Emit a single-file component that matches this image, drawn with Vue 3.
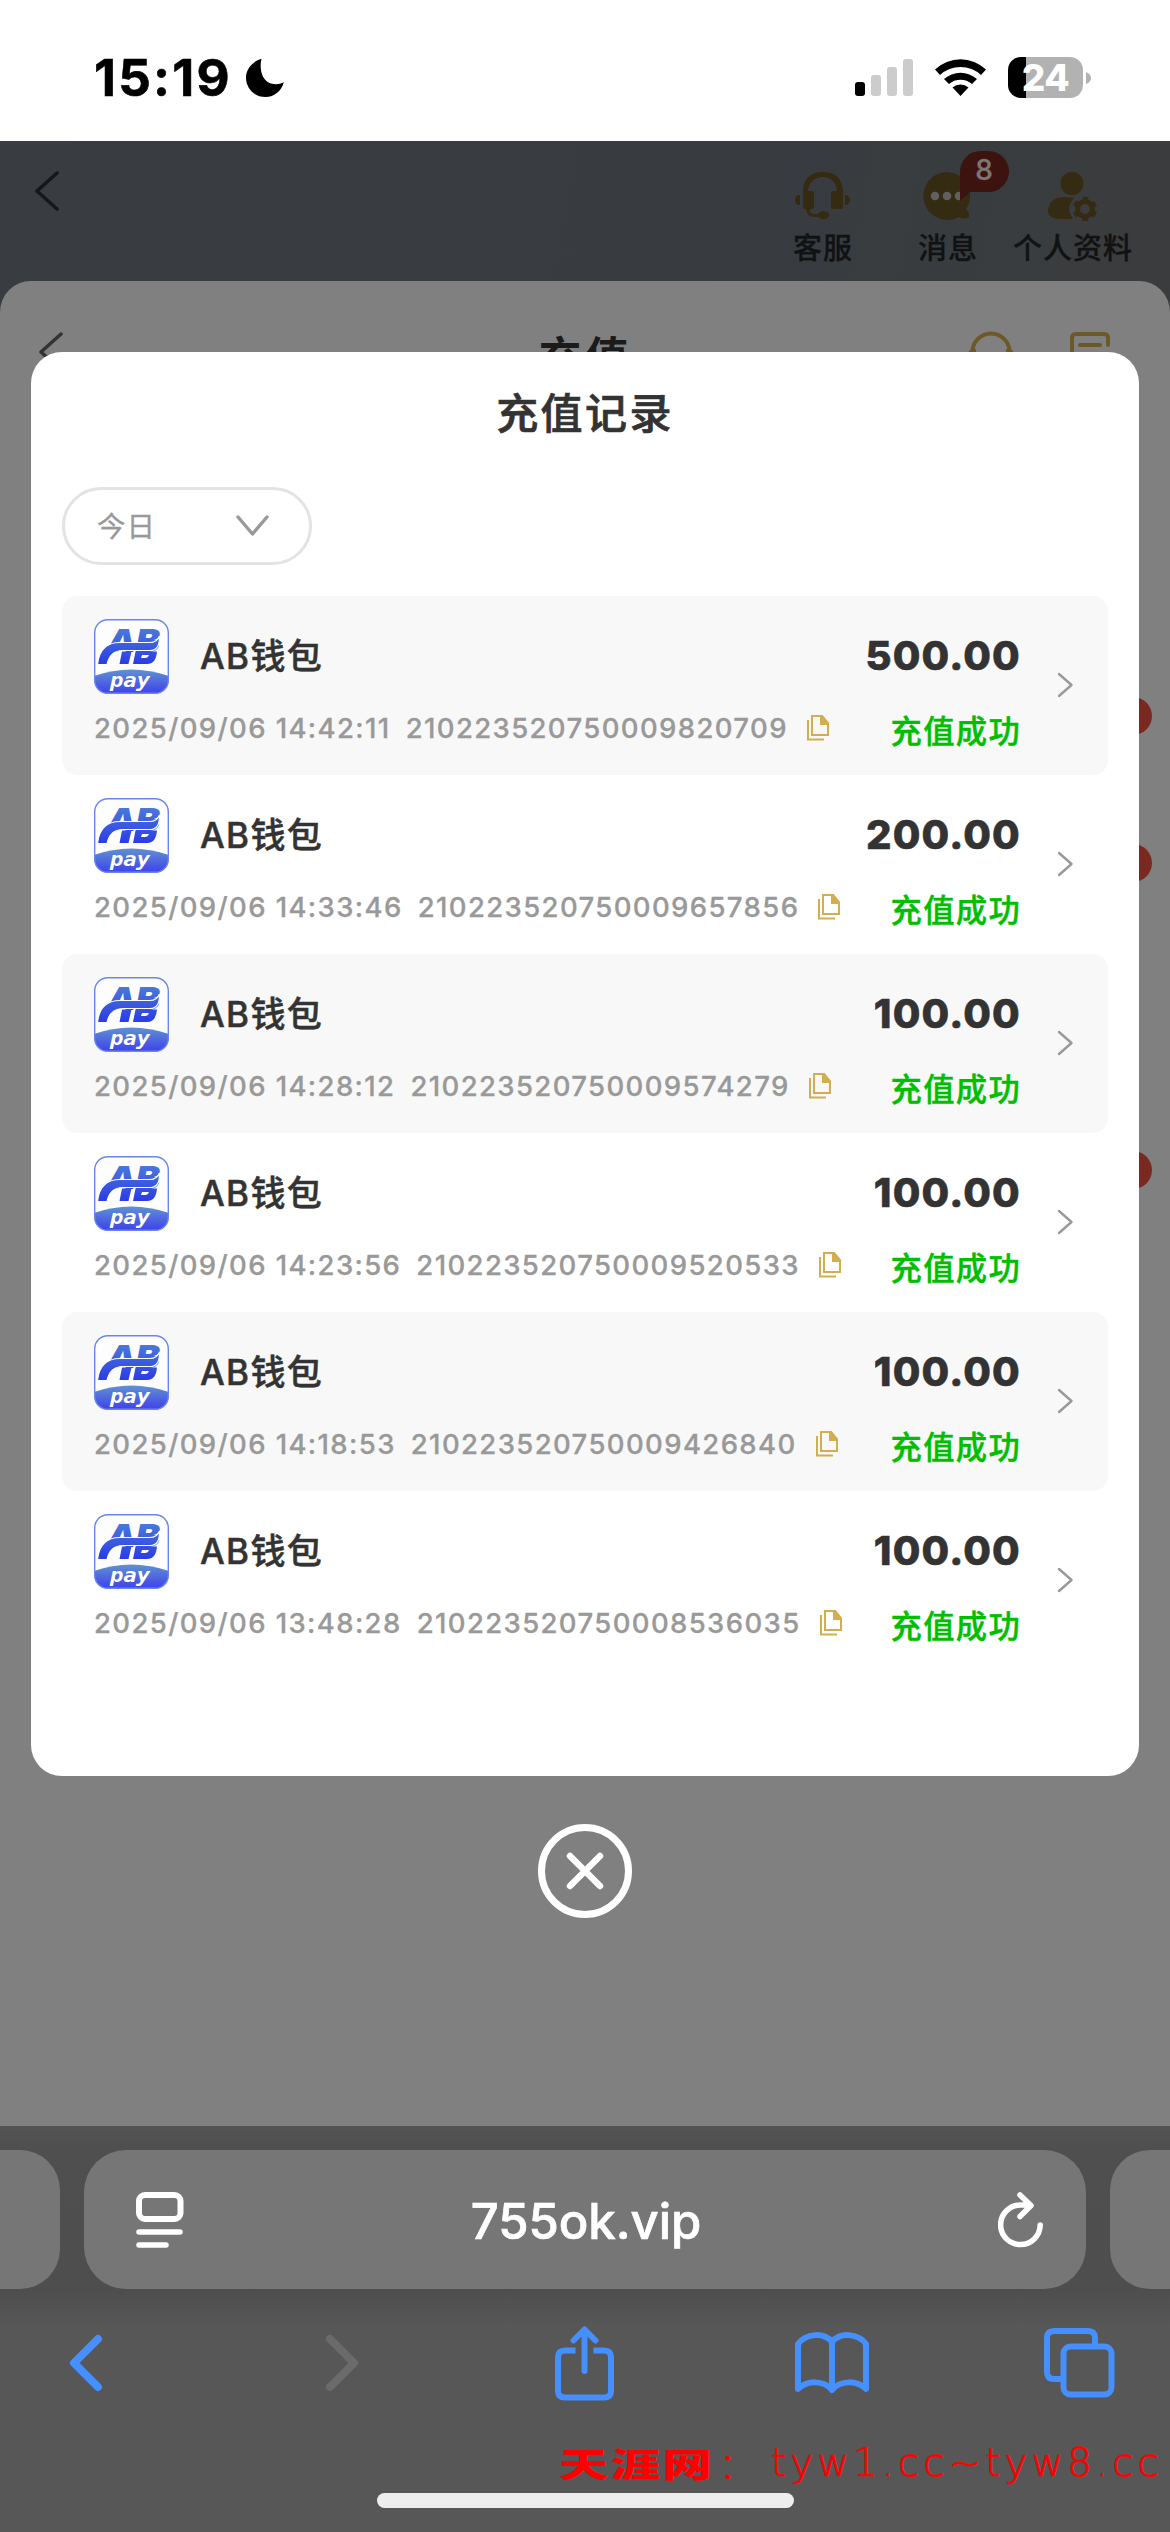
<script setup>
const records = [
  { time: '2025/09/06 14:42:11', id: '210223520750009820709', amount: '500.00' },
  { time: '2025/09/06 14:33:46', id: '210223520750009657856', amount: '200.00' },
  { time: '2025/09/06 14:28:12', id: '210223520750009574279', amount: '100.00' },
  { time: '2025/09/06 14:23:56', id: '210223520750009520533', amount: '100.00' },
  { time: '2025/09/06 14:18:53', id: '210223520750009426840', amount: '100.00' },
  { time: '2025/09/06 13:48:28', id: '210223520750008536035', amount: '100.00' }
]
</script>

<template>
  <div class="phone">
    <div class="status-bar">
      <span class="clock">15:19</span>
      <svg class="moon" width="40" height="40" viewBox="0 0 40 40"><path d="M16.500.8C14 11 17 23 26 25.500C30.500 26.800 35 26.300 38.800 24.300C36.500 33 29.500 39 20.500 39C9.500 39 1 30.500 1 19.500C1 11 7.500 3.500 16.500.8Z" /></svg>
      <span class="grow"></span>
      <svg width="58" height="38" viewBox="0 0 58 38">
        <rect y="23" width="10" height="14" rx="3" />
        <g fill="#ccc"><rect x="16" y="16" width="10" height="21" rx="3" /><rect x="32" y="8" width="10" height="29" rx="3" /><rect x="48" y="0" width="10" height="37" rx="3" /></g>
      </svg>
      <svg class="wifi" width="51" height="38" viewBox="0 0 51 38">
        <path d="M0 10.500A37 37 0 0 1 51 10.500L46 16A30 30 0 0 0 5 16Z" />
        <path d="M9 20A25 25 0 0 1 42 20L37 25A17.500 17.500 0 0 0 14 25Z" />
        <path d="M17.500 28.500A12 12 0 0 1 33.500 28.500L25.500 37Z" />
      </svg>
      <div class="battery"><span>24</span></div>
      <svg class="nub" width="5" height="12" viewBox="0 0 5 12"><path d="M0 0Q5 2 5 6T0 12Z" fill="#b2b2b2" /></svg>
    </div>

    <div class="page">
      <div class="top">
        <svg class="top-back" width="26" height="40" viewBox="0 0 26 40"><path d="M23 2L3 20L23 38" fill="none" stroke="#161718" stroke-width="3.500" stroke-linecap="round" stroke-linejoin="round" /></svg>
        <span class="grow"></span>
        <div class="entry service">
          <svg width="56" height="50" viewBox="0 0 56 50" fill="#352a12">
            <path d="M8 21C8 8 15 1 28 1S48 8 48 21V36Q48 38 46 38H38Q36 38 36 36V22Q36 20 38 20H42C41 11 36 6 28 6S14 11 13 20H17Q19 20 19 22V36Q19 38 17 38H15Q14 43 19 43H23Q25 40 28 40Q34 40 34 44Q34 48 28 48Q25 48 23 46H19Q12 46 11 38Q8 38 8 36Z" />
            <path d="M5 24V34Q0 34 0 29T5 24ZM50 24V34Q55 34 55 29T50 24Z" />
          </svg>
          <span>客服</span>
        </div>
        <div class="entry message">
          <svg width="49" height="50" viewBox="0 0 49 50"><path d="M24 1A24 24 0 1 0 36 46Q42 49 46 46V42L43 38A24 24 0 0 0 24 1Z" fill="#352a12" /><g fill="#606060"><circle cx="12" cy="25" r="4.300" /><circle cx="24" cy="25" r="4.300" /><circle cx="36" cy="25" r="4.300" /></g></svg>
          <span>消息</span>
          <div class="badge">
            <svg width="49" height="50" viewBox="0 0 49 50"><path d="M0 50V21A20.500 20.500 0 0 1 20.500 0H28.500A20.500 20.500 0 0 1 28.500 41H10Z" fill="#3d1310" /></svg>
            <b>8</b>
          </div>
        </div>
        <div class="entry profile">
          <svg width="50" height="50" viewBox="0 0 50 50">
            <g fill="#352a12"><circle cx="24" cy="12.500" r="11.500" /><path d="M26 27Q17 37 25 48H12Q0 47 0 40Q1 26 17 26Q22 26 26 27Z" /></g>
            <circle cx="37" cy="38" r="7.500" fill="none" stroke="#352a12" stroke-width="5" />
            <circle cx="37" cy="38" r="10.500" fill="none" stroke="#352a12" stroke-width="3.500" stroke-dasharray="5.500 5.500" stroke-dashoffset="-2.700" />
          </svg>
          <span>个人资料</span>
        </div>
      </div>

      <div class="sheet">
        <div class="sheet-head">
          <svg class="sheet-back" width="24" height="40" viewBox="0 0 24 40"><path d="M22 2L2 20L22 38" fill="none" stroke="#333" stroke-width="3.500" stroke-linecap="round" stroke-linejoin="round" /></svg>
          <span class="sheet-title">充值</span>
          <div class="sheet-tools">
            <svg width="46" height="44" viewBox="0 0 46 44" fill="none" stroke="#6d5827" stroke-width="4"><path d="M4.500 30V21A18.500 18.500 0 0 1 41.500 21V30M8 20H4Q1 22 1 27M38 20H42Q45 22 45 27" /></svg>
            <svg width="41" height="44" viewBox="0 0 41 44" fill="none" stroke="#6d5827" stroke-width="4" stroke-linecap="round"><path d="M38 14V7Q38 3 34 3H6Q2 3 2 7V40M10 14H30" /></svg>
          </div>
        </div>
        <div class="tags"><i></i><i></i><i></i></div>
      </div>

      <div class="overlay">
        <div class="modal">
          <h2>充值记录</h2>
          <div class="filter">
            <span>今日</span>
            <svg width="33" height="22" viewBox="0 0 33 22"><path d="M2 2L16.500 19L31 2" fill="none" stroke="#999" stroke-width="3.400" stroke-linecap="round" stroke-linejoin="round" /></svg>
          </div>
          <div class="list">
            <div v-for="(r, i) in records" :key="r.id" class="row" :class="{ shaded: i % 2 === 0 }">
              <div class="info">
                <div class="channel">
                  <svg width="75" height="75" viewBox="0 0 75 75">
                    <defs>
                      <linearGradient id="mark" x1="0" y1="9" x2="0" y2="45" gradientUnits="userSpaceOnUse"><stop offset="0" stop-color="#4b7ad8" /><stop offset="1" stop-color="#2b3ce6" /></linearGradient>
                      <linearGradient id="hill" x1="0" y1="50" x2="0" y2="72" gradientUnits="userSpaceOnUse"><stop offset="0" stop-color="#6093d0" /><stop offset="1" stop-color="#4249ea" /></linearGradient>
                      <clipPath id="tile"><rect x=".5" y=".5" width="74" height="74" rx="13" /></clipPath>
                    </defs>
                    <rect x=".7" y=".7" width="73.600" height="73.600" rx="13" fill="#fdfdfe" />
                    <path d="M0 57Q37 44 75 57V75H0Z" fill="url(#hill)" clip-path="url(#tile)" />
                    <rect x=".7" y=".7" width="73.600" height="73.600" rx="13" fill="none" stroke="#6b86ea" stroke-width="1.400" />
                    <text class="mark-text" x="13" y="32.500" textLength="53" lengthAdjust="spacingAndGlyphs" fill="url(#mark)">AB</text>
                    <path d="M28 32.500H37.500L34.500 45H25.500ZM41.500 32.500H63Q62 45 53 45H39Z" fill="url(#mark)" />
                    <path d="M48 36H55Q54 39 51 39H47Z" fill="#fdfdfe" />
                    <path d="M3.500 45.500C5 31 13 23.500 26 23.500H56Q63 23.500 65.500 17Q66 31.500 56 31.500H29Q16 31.500 13 45.500Z" fill="url(#mark)" stroke="#fdfdfe" stroke-width="1.200" />
                    <text class="pay-text" x="16" y="68" textLength="40" lengthAdjust="spacingAndGlyphs" fill="#fff">pay</text>
                  </svg>
                  <span>AB钱包</span>
                </div>
                <div class="meta">
                  <span>{{ r.time }}</span><span class="order">{{ r.id }}</span>
                  <svg width="22" height="26" viewBox="0 0 22 26" fill="none" stroke="#d2ae50" stroke-width="2"><path d="M5 1H15L21 8V20H5Z" /><path d="M14 1V9H21L15 1Z" fill="#d2ae50" /><path d="M1 5V24.500H17" /></svg>
                </div>
              </div>
              <div class="result">
                <div class="amount">{{ r.amount }}</div>
                <div class="state">充值成功</div>
              </div>
              <svg class="more" width="17" height="26" viewBox="0 0 17 26"><path d="M2 2L14.500 13L2 24" fill="none" stroke="#999" stroke-width="2.400" stroke-linecap="round" stroke-linejoin="round" /></svg>
            </div>
          </div>
        </div>
        <svg class="close" width="94" height="94" viewBox="0 0 94 94" fill="none" stroke="#fff"><circle cx="47" cy="47" r="43.500" stroke-width="7" /><path d="M32 32L62 62M62 32L32 62" stroke-width="6.500" stroke-linecap="round" /></svg>
      </div>
    </div>

    <div class="browser">
      <div class="tabs-strip">
        <div class="tab side left"></div>
        <div class="tab address">
          <svg width="48" height="56" viewBox="0 0 48 56" fill="none" stroke="#fff" stroke-width="6" stroke-linecap="round"><rect x="3" y="3" width="41.500" height="24" rx="6" /><path d="M3 40H44M3 53H30" stroke-width="5.500" /></svg>
          <span>755ok.vip</span>
          <svg width="46" height="56" viewBox="0 0 46 56" fill="none" stroke="#fff" stroke-width="5.500" stroke-linecap="round" stroke-linejoin="round"><path d="M42.200 33A19.800 19.800 0 1 1 22.500 13H31M22 3L33 13.500L22 24.500" /></svg>
        </div>
        <div class="tab side right"></div>
      </div>
      <div class="tools">
        <svg width="34" height="58" viewBox="0 0 34 58"><path d="M29 5L5 29L29 53" stroke-width="8" /></svg>
        <svg class="forward" width="34" height="58" viewBox="0 0 34 58"><path d="M5 5L29 29L5 53" stroke-width="8" /></svg>
        <svg class="share" width="59" height="75" viewBox="0 0 59 75"><path d="M20.500 24.500H10Q3 24.500 3 31.500V65Q3 71.500 10 71.500H49Q56 71.500 56 65V31.500Q56 24.500 49 24.500H38.500" stroke-linecap="butt" /><path d="M29.500 45V4M18.500 14.500L29.500 3.500L40.500 14.500" /></svg>
        <svg class="book" width="74" height="62" viewBox="0 0 74 62"><path d="M37 10C29 0 11 1 3 12V57C12 48 29 48 37 58C45 48 62 48 71 57V12C63 1 45 0 37 10V58" /></svg>
        <svg class="pages" width="71" height="70" viewBox="0 0 71 70"><path d="M17 51H10Q3 51 3 44V10Q3 3 10 3H44Q51 3 51 10V16" stroke-linecap="butt" /><rect x="19.500" y="18.500" width="48" height="48" rx="7" /></svg>
      </div>
      <div class="home-bar"></div>
      <div class="watermark"><b>天涯网</b><i>：</i><span>tyw1.cc~tyw8.cc</span></div>
    </div>
  </div>
</template>

<style>
body { margin: 0; }
</style>

<style scoped>
.phone { width: 1170px; height: 2532px; overflow: hidden; display: flex; flex-direction: column; font-family: Inter, "Noto Sans CJK SC", sans-serif; background: #fff; }
.phone svg { display: block; flex: none; }
.grow { flex: 1; }

.status-bar { height: 141px; box-sizing: border-box; padding: 14px 79px 0 94px; display: flex; align-items: center; }
.clock { font-size: 51px; font-weight: 700; letter-spacing: 2.200px; width: 151px; white-space: nowrap; -webkit-text-stroke: 0.6px #000; }
.wifi { margin-left: 22px; }
.battery { margin-left: 22px; width: 75px; height: 41px; border-radius: 13px; background: linear-gradient(90deg, #000 18px, #b2b2b2 18px); color: #fff; font-size: 37px; font-weight: 800; line-height: 41px; text-align: center; letter-spacing: -0.5px; }
.nub { margin-left: 3px; }

.page { height: 1985px; position: relative; background: linear-gradient(100deg, #393c40 0%, #383c40 55%, #3b3c3d 80%, #3b3b3c 100%); }
.top { height: 140px; display: flex; box-sizing: border-box; padding: 30px 37px 0 34px; color: #111213; }
.entry { display: flex; flex-direction: column; align-items: center; position: relative; font-size: 29px; font-weight: 500; line-height: 36px; letter-spacing: 1px; white-space: nowrap; -webkit-text-stroke: 0.3px; }
.entry span { margin-top: 10px; }
.service { margin-right: 65px; }
.message { margin-right: 35px; }
.badge { position: absolute; left: 42px; top: -20px; width: 49px; height: 50px; }
.badge b { position: absolute; left: 0; top: 0; width: 49px; text-align: center; line-height: 38px; font-size: 28px; font-weight: 500; color: #807575; }

.sheet { height: 1845px; background: #808080; border-radius: 31px 31px 0 0; }
.sheet-head { height: 140px; box-sizing: border-box; padding: 50px 59px 0 39px; display: flex; justify-content: space-between; }
.sheet-back { margin-top: 1px; }
.sheet-title { font-size: 43px; line-height: 48px; font-weight: 700; letter-spacing: 4px; color: #1b1b1b; margin-left: 140px; margin-top: 2px; }
.sheet-tools { display: flex; gap: 56px; }
.tags { display: flex; flex-direction: column; align-items: flex-end; padding: 276px 18px 0 0; }
.tags i { width: 38px; height: 38px; border-radius: 50%; background: #7a2920; margin-bottom: 109px; }
.tags i:nth-child(2) { margin-bottom: 269px; }

.overlay { position: absolute; inset: 0; display: flex; flex-direction: column; align-items: center; padding-top: 211px; }
.modal { width: 1108px; height: 1424px; box-sizing: border-box; border-radius: 31px; background: #fff; padding: 0 31px; }
h2 { margin: 0; padding-top: 31px; height: 104px; line-height: 62px; text-align: center; font-size: 42px; font-weight: 500; letter-spacing: 2.400px; color: #333; -webkit-text-stroke: 0.7px #333; }
.filter { width: 250px; height: 78px; box-sizing: border-box; border: 3px solid #e3e3e3; border-radius: 39px; padding: 0 40px 0 32px; display: flex; justify-content: space-between; align-items: center; color: #999; font-size: 28.500px; letter-spacing: 1px; -webkit-text-stroke: 0.3px #999; }
.filter span { margin-top: -3px; }
.list { margin-top: 31px; }
.row { height: 179.100px; box-sizing: border-box; border-radius: 15px; padding: 0 34px 0 32px; display: flex; }
.row.shaded { background: #f8f8f8; }
.info { flex: 1; padding-top: 23px; }
.channel { display: flex; align-items: center; gap: 31px; font-size: 35px; font-weight: 500; letter-spacing: 1.300px; color: #333; }
.channel span { line-height: 60px; margin-top: -1px; -webkit-text-stroke: 0.5px #333; }
.mark-text { font: italic 900 32px Inter, sans-serif; letter-spacing: 0; }
.pay-text { font: italic 700 20px "DejaVu Sans Mono", monospace; letter-spacing: 0; }
.meta { margin-top: 14px; display: flex; align-items: center; height: 40px; font-size: 27.500px; font-weight: 500; letter-spacing: 1.380px; color: #999; white-space: nowrap; -webkit-text-stroke: 0.3px #999; }
.order { margin-left: 15px; margin-right: 19px; }
.result { text-align: right; padding-top: 30px; }
.amount { font-size: 40px; line-height: 60px; font-weight: 800; letter-spacing: 1.200px; color: #333; -webkit-text-stroke: 0.6px #333; }
.state { margin-top: 26px; font-size: 31.300px; line-height: 40px; font-weight: 500; letter-spacing: 1.300px; color: #00bf00; -webkit-text-stroke: 0.4px #00bf00; }
.more { margin: 76px 0 0 36px; }
.close { margin-top: 48px; }

.browser { height: 406px; position: relative; background: linear-gradient(#545454, #4f4f4f 22px, #4e4e4e 165px, #575757 200px); }
.tabs-strip { padding-top: 24px; display: flex; justify-content: space-between; }
.tab { height: 139px; background: #767676; box-sizing: border-box; }
.side { width: 60px; }
.left { border-radius: 0 40px 40px 0; }
.right { border-radius: 40px 0 0 40px; }
.address { width: 1002px; border-radius: 42px; padding: 0 42px 0 52px; display: flex; align-items: center; justify-content: space-between; color: #fff; font-size: 49px; font-weight: 500; }
.address span { margin-right: 10px; margin-top: 3px; -webkit-text-stroke: 0.7px #fff; }
.tools { display: flex; align-items: center; height: 148px; padding: 0 56px 0 69px; }
.tools svg { fill: none; stroke: #458fff; stroke-width: 6; stroke-linecap: round; stroke-linejoin: round; }
.tools svg.forward { stroke: #6b6b6b; margin-left: 222px; }
.tools .share { margin-left: 196px; }
.tools .book { margin-left: 181px; }
.tools .pages { margin-left: 175px; }
.home-bar { width: 417px; height: 15px; border-radius: 8px; background: #eee; margin: 56px auto 0; }
.watermark { position: absolute; left: 559px; top: 313px; height: 48px; line-height: 48px; display: flex; color: #f00; white-space: nowrap; }
.watermark b { font: 900 33px/48px "Noto Sans CJK SC", sans-serif; width: 160px; letter-spacing: 1.500px; transform: scaleX(1.5); transform-origin: left; }
.watermark i { font: normal 300 36px/48px "Noto Sans CJK SC", sans-serif; width: 52px; }
.watermark span { font: 200 39px/48px "DejaVu Sans", sans-serif; letter-spacing: 3.900px; -webkit-text-stroke: 0.7px #f00; }
</style>
